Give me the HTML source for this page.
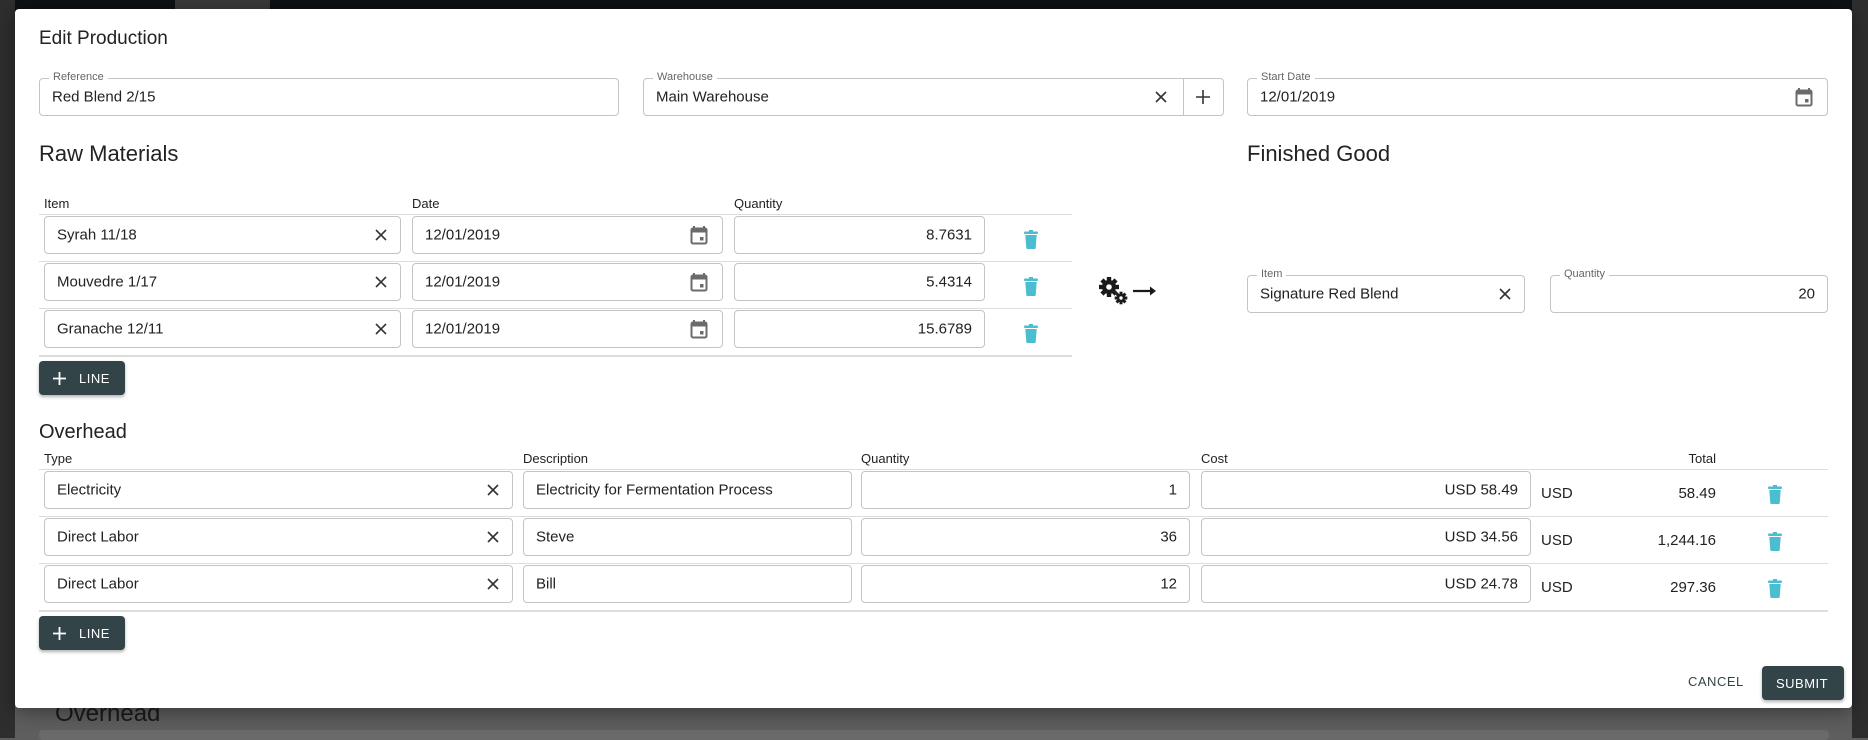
<!DOCTYPE html>
<html><head><meta charset="utf-8">
<style>
*{box-sizing:border-box;margin:0;padding:0}
body{width:1868px;height:738px;overflow:hidden;position:relative;background:#5e5e5e;font-family:"Liberation Sans",Arial,sans-serif;color:#222}
.abs{position:absolute}
.topbar{left:0;top:0;width:1868px;height:26px;background:#0e1113}
.side{left:0;top:0;width:15px;height:738px;background:#2e2e2e}
.bgtitle{left:55px;top:700px;font-size:24px;color:#1a1a1a}
.dlg{left:15px;top:9px;width:1837px;height:699px;background:#fff;border-radius:4px;box-shadow:0 4px 20px rgba(0,0,0,.4)}
.fld{position:absolute;border:1px solid #c4c4c4;border-radius:4px;background:#fff;font-size:15px;color:#222}
.fld .t{position:absolute;left:12px;top:50%;transform:translateY(-50%);white-space:nowrap}
.fld .r{position:absolute;right:12px;top:50%;transform:translateY(-50%);white-space:nowrap}
.fld .lb{position:absolute;left:9px;top:-8px;background:#fff;padding:0 4px;font-size:11px;color:#666}
.x{position:absolute;top:50%;transform:translateY(-50%);width:14px;height:14px}
.h{position:absolute;font-size:13px;color:#222}
.line{position:absolute;height:1px;background:#ddd}
.btn{position:absolute;background:#324448;color:#fff;border-radius:4px;font-size:13px;letter-spacing:.5px;box-shadow:0 2px 3px rgba(0,0,0,.3)}
.sec{position:absolute;font-size:22px;color:#222}
</style></head><body>
<div class="abs topbar"></div>
<div class="abs side"></div>
<div class="abs" style="left:1852px;top:0;width:16px;height:738px;background:#2e2e2e"></div>
<div class="abs" style="left:175px;top:0;width:95px;height:10px;background:#3a3a3a"></div>
<div class="abs bgtitle">Overhead</div>
<div class="abs" style="left:39px;top:730px;width:1790px;height:10px;background:#6a6a6a;border-radius:4px"></div>

<div class="abs dlg"></div>
<svg width="0" height="0" style="position:absolute"><defs>
<symbol id="xi" viewBox="0 0 14 14"><path d="M2 2L12 12M12 2L2 12" stroke="#333" stroke-width="1.6"/></symbol>
<symbol id="cal" viewBox="0 0 18 20"><path d="M4 1v3M14 1v3" stroke="#6b6b6b" stroke-width="2"/><rect x="1.5" y="3.5" width="15" height="15" rx="1.5" fill="none" stroke="#6b6b6b" stroke-width="2"/><rect x="1.5" y="3.5" width="15" height="4" fill="#6b6b6b"/><rect x="10" y="12" width="3.5" height="3.5" fill="#6b6b6b"/></symbol>
<symbol id="tr" viewBox="0 0 14 19"><rect x="0" y="1.5" width="14" height="2.5" rx="1" fill="#4bbdd1"/><rect x="5" y="0" width="4" height="2" fill="#4bbdd1"/><path d="M1.3 5h11.4l-1 13a1 1 0 0 1-1 1H3.3a1 1 0 0 1-1-1z" fill="#4bbdd1"/></symbol>
</defs></svg>

<div class="abs" style="left:39px;top:28px;font-size:19px;color:#222">Edit Production</div>

<div class="fld" style="left:39px;top:78px;width:580px;height:38px"><span class="lb">Reference</span><span class="t">Red Blend 2/15</span></div>
<div class="fld" style="left:643px;top:78px;width:581px;height:38px"><span class="lb">Warehouse</span><span class="t">Main Warehouse</span>
<svg class="x" style="right:55px"><use href="#xi"/></svg>
<div style="position:absolute;left:539px;top:0;width:1px;height:36px;background:#c4c4c4"></div>
<svg style="position:absolute;right:12px;top:10px" width="16" height="16"><path d="M8 1v14M1 8h14" stroke="#333" stroke-width="1.6"/></svg></div>
<div class="fld" style="left:1247px;top:78px;width:581px;height:38px"><span class="lb">Start Date</span><span class="t">12/01/2019</span>
<svg style="position:absolute;right:14px;top:8px" width="18" height="20"><use href="#cal"/></svg></div>

<div class="sec" style="left:39px;top:141px">Raw Materials</div>
<div class="sec" style="left:1247px;top:141px">Finished Good</div>

<div class="h" style="left:44px;top:196px">Item</div>
<div class="h" style="left:412px;top:196px">Date</div>
<div class="h" style="left:734px;top:196px">Quantity</div>
<div class="line" style="left:39px;top:214px;width:1033px"></div>
<div class="line" style="left:39px;top:261px;width:1033px"></div>
<div class="line" style="left:39px;top:308px;width:1033px"></div>
<div class="line" style="left:39px;top:355px;width:1033px;height:2px"></div>

<div class="fld" style="left:44px;top:216px;width:357px;height:38px"><span class="t">Syrah 11/18</span><svg class="x" style="right:12px"><use href="#xi"/></svg></div>
<div class="fld" style="left:412px;top:216px;width:311px;height:38px"><span class="t">12/01/2019</span><svg style="position:absolute;right:14px;top:8px" width="18" height="20"><use href="#cal"/></svg></div>
<div class="fld" style="left:734px;top:216px;width:251px;height:38px"><span class="r">8.7631</span></div>
<svg class="abs" style="left:1024px;top:230px" width="14" height="19"><use href="#tr"/></svg>

<div class="fld" style="left:44px;top:263px;width:357px;height:38px"><span class="t">Mouvedre 1/17</span><svg class="x" style="right:12px"><use href="#xi"/></svg></div>
<div class="fld" style="left:412px;top:263px;width:311px;height:38px"><span class="t">12/01/2019</span><svg style="position:absolute;right:14px;top:8px" width="18" height="20"><use href="#cal"/></svg></div>
<div class="fld" style="left:734px;top:263px;width:251px;height:38px"><span class="r">5.4314</span></div>
<svg class="abs" style="left:1024px;top:277px" width="14" height="19"><use href="#tr"/></svg>

<div class="fld" style="left:44px;top:310px;width:357px;height:38px"><span class="t">Granache 12/11</span><svg class="x" style="right:12px"><use href="#xi"/></svg></div>
<div class="fld" style="left:412px;top:310px;width:311px;height:38px"><span class="t">12/01/2019</span><svg style="position:absolute;right:14px;top:8px" width="18" height="20"><use href="#cal"/></svg></div>
<div class="fld" style="left:734px;top:310px;width:251px;height:38px"><span class="r">15.6789</span></div>
<svg class="abs" style="left:1024px;top:324px" width="14" height="19"><use href="#tr"/></svg>

<div class="btn" style="left:39px;top:361px;width:86px;height:34px"><svg style="position:absolute;left:14px;top:11px" width="13" height="13"><path d="M6.5 0v13M0 6.5h13" stroke="#fff" stroke-width="1.8"/></svg><span style="position:absolute;left:40px;top:10px">LINE</span></div>

<svg class="abs" style="left:1098px;top:276px" width="62" height="30" viewBox="0 0 62 30">
<g transform="translate(11,11)"><circle r="7" fill="#1a1a1a"/><g fill="#1a1a1a"><rect x="-2.2" y="-10" width="4.4" height="20"/><rect x="-2.2" y="-10" width="4.4" height="20" transform="rotate(45)"/><rect x="-2.2" y="-10" width="4.4" height="20" transform="rotate(90)"/><rect x="-2.2" y="-10" width="4.4" height="20" transform="rotate(135)"/></g><circle r="2.8" fill="#fff"/></g>
<g transform="translate(23,22)"><circle r="4.2" fill="#1a1a1a"/><g fill="#1a1a1a"><rect x="-1.5" y="-6.3" width="3" height="12.6"/><rect x="-1.5" y="-6.3" width="3" height="12.6" transform="rotate(45)"/><rect x="-1.5" y="-6.3" width="3" height="12.6" transform="rotate(90)"/><rect x="-1.5" y="-6.3" width="3" height="12.6" transform="rotate(135)"/></g><circle r="1.7" fill="#fff"/></g>
<path d="M35 15h20" stroke="#1a1a1a" stroke-width="2.2"/><path d="M52 10.5l6 4.5-6 4.5z" fill="#1a1a1a"/>
</svg>

<div class="fld" style="left:1247px;top:275px;width:278px;height:38px"><span class="lb">Item</span><span class="t">Signature Red Blend</span><svg class="x" style="right:12px"><use href="#xi"/></svg></div>
<div class="fld" style="left:1550px;top:275px;width:278px;height:38px"><span class="lb">Quantity</span><span class="r">20</span></div>

<div class="sec" style="left:39px;top:421px;font-size:20px">Overhead</div>
<div class="h" style="left:44px;top:451px">Type</div>
<div class="h" style="left:523px;top:451px">Description</div>
<div class="h" style="left:861px;top:451px">Quantity</div>
<div class="h" style="left:1201px;top:451px">Cost</div>
<div class="h" style="left:1660px;top:451px;width:56px;text-align:right">Total</div>
<div class="line" style="left:39px;top:469px;width:1789px"></div>
<div class="line" style="left:39px;top:516px;width:1789px"></div>
<div class="line" style="left:39px;top:563px;width:1789px"></div>
<div class="line" style="left:39px;top:610px;width:1789px;height:2px"></div>

<div class="fld" style="left:44px;top:471px;width:469px;height:38px"><span class="t">Electricity</span><svg class="x" style="right:12px"><use href="#xi"/></svg></div>
<div class="fld" style="left:523px;top:471px;width:329px;height:38px"><span class="t">Electricity for Fermentation Process</span></div>
<div class="fld" style="left:861px;top:471px;width:329px;height:38px"><span class="r">1</span></div>
<div class="fld" style="left:1201px;top:471px;width:330px;height:38px"><span class="r">USD 58.49</span></div>
<div class="abs" style="left:1541px;top:485px;font-size:15px">USD</div>
<div class="abs" style="left:1600px;top:485px;width:116px;text-align:right;font-size:15px">58.49</div>
<svg class="abs" style="left:1768px;top:485px" width="14" height="19"><use href="#tr"/></svg>

<div class="fld" style="left:44px;top:518px;width:469px;height:38px"><span class="t">Direct Labor</span><svg class="x" style="right:12px"><use href="#xi"/></svg></div>
<div class="fld" style="left:523px;top:518px;width:329px;height:38px"><span class="t">Steve</span></div>
<div class="fld" style="left:861px;top:518px;width:329px;height:38px"><span class="r">36</span></div>
<div class="fld" style="left:1201px;top:518px;width:330px;height:38px"><span class="r">USD 34.56</span></div>
<div class="abs" style="left:1541px;top:532px;font-size:15px">USD</div>
<div class="abs" style="left:1600px;top:532px;width:116px;text-align:right;font-size:15px">1,244.16</div>
<svg class="abs" style="left:1768px;top:532px" width="14" height="19"><use href="#tr"/></svg>

<div class="fld" style="left:44px;top:565px;width:469px;height:38px"><span class="t">Direct Labor</span><svg class="x" style="right:12px"><use href="#xi"/></svg></div>
<div class="fld" style="left:523px;top:565px;width:329px;height:38px"><span class="t">Bill</span></div>
<div class="fld" style="left:861px;top:565px;width:329px;height:38px"><span class="r">12</span></div>
<div class="fld" style="left:1201px;top:565px;width:330px;height:38px"><span class="r">USD 24.78</span></div>
<div class="abs" style="left:1541px;top:579px;font-size:15px">USD</div>
<div class="abs" style="left:1600px;top:579px;width:116px;text-align:right;font-size:15px">297.36</div>
<svg class="abs" style="left:1768px;top:579px" width="14" height="19"><use href="#tr"/></svg>

<div class="btn" style="left:39px;top:616px;width:86px;height:34px"><svg style="position:absolute;left:14px;top:11px" width="13" height="13"><path d="M6.5 0v13M0 6.5h13" stroke="#fff" stroke-width="1.8"/></svg><span style="position:absolute;left:40px;top:10px">LINE</span></div>

<div class="abs" style="left:1688px;top:674px;font-size:13px;letter-spacing:.5px;color:#324448">CANCEL</div>
<div class="btn" style="left:1762px;top:666px;width:82px;height:34px"><span style="position:absolute;left:14px;top:10px">SUBMIT</span></div>
</body></html>
